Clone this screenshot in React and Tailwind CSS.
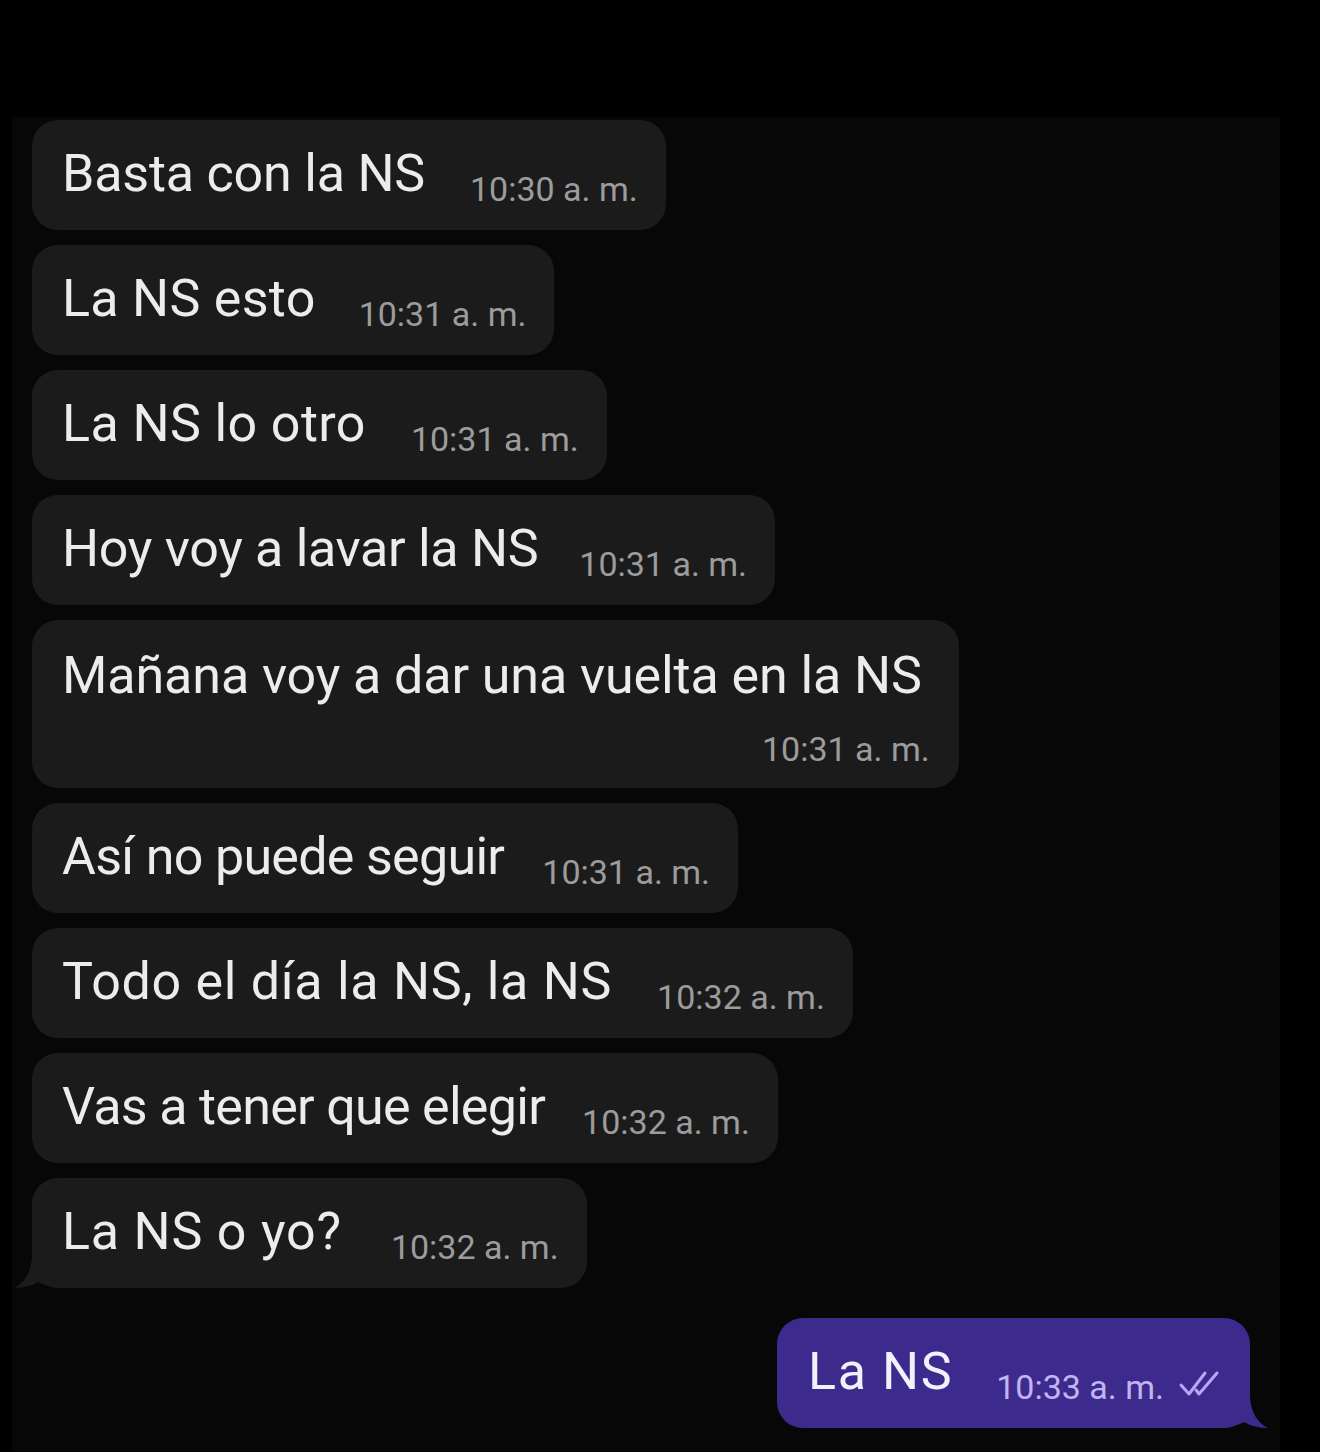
const MESSAGES = [
  { text: "Basta con la NS", time: "10:30 a. m.", tr: "tracking-[-0.2px]", gap: "ml-[45px]" },
  { text: "La NS esto", time: "10:31 a. m.", tr: "tracking-[0.3px]", gap: "ml-[43px]" },
  { text: "La NS lo otro", time: "10:31 a. m.", tr: "tracking-[0.4px]", gap: "ml-[45px]" },
  { text: "Hoy voy a lavar la NS", time: "10:31 a. m.", tr: "tracking-[-0.3px]", gap: "ml-[41px]" },
  { text: "Mañana voy a dar una vuelta en la NS", time: "10:31 a. m.", tr: "tracking-[-0.1px]", wrap: true },
  { text: "Así no puede seguir", time: "10:31 a. m.", tr: "tracking-[-0.7px]", gap: "ml-[38px]" },
  { text: "Todo el día la NS, la NS", time: "10:32 a. m.", tr: "tracking-[0.7px]", gap: "ml-[45px]" },
  { text: "Vas a tener que elegir", time: "10:32 a. m.", tr: "tracking-[-0.7px]", gap: "ml-[37px]" },
  { text: "La NS o yo?", time: "10:32 a. m.", tr: "tracking-[0.8px]", gap: "ml-[49px]", tail: true },
];

const FONT = { fontFamily: "Roboto, 'Noto Sans', sans-serif" };

function Received({ text, time, wrap, tail, tr, gap }) {
  if (wrap) {
    return (
      <div className="relative self-start flex flex-col rounded-[26px] bg-[#1b1b1c] pl-[30px] pr-[37px] pt-[25px] pb-[19px]">
        <span className={`text-[52px] leading-[62px] text-[#ececec] ${tr}`}>{text}</span>
        <span className="mt-[22px] mr-[-8px] self-end text-[34px] leading-[40px] text-[#9c9c9c]">{time}</span>
      </div>
    );
  }
  return (
    <div className="relative self-start flex items-end rounded-[26px] bg-[#1b1b1c] pl-[30px] pr-[28px] pt-[23px] pb-[25px]">
      <span className={`text-[52px] leading-[62px] text-[#ececec] ${tr}`}>{text}</span>
      <span className={`${gap} mb-[-4px] text-[34px] leading-[40px] text-[#9c9c9c]`}>{time}</span>
      {tail && (
        <svg className="absolute left-[-18px] bottom-0" width="44" height="50" viewBox="0 0 44 50">
          <path d="M44 0 L18 0 L18 20 Q16 42 0 50 Q14 50 24 44 Q32 48 44 50 Z" fill="#1b1b1c" />
        </svg>
      )}
    </div>
  );
}

function Sent({ text, time }) {
  return (
    <div className="relative self-end mr-[10px] flex items-end rounded-[26px] bg-[#3c2a8c] pl-[31px] pr-[28px] pt-[23px] pb-[25px]">
      <span className="text-[52px] leading-[62px] text-[#f2f0fa] tracking-[1.6px]">{text}</span>
      <span className="ml-[43px] mb-[-4px] text-[34px] leading-[40px] text-[#c2b4f2]">{time}</span>
      <svg className="ml-[14px] mb-[5px]" width="44" height="28" viewBox="0 0 44 28" fill="none" stroke="#b9a6f6" strokeWidth="3" strokeLinecap="round" strokeLinejoin="round">
        <path d="M3 15 L11 24 L27 3" />
        <path d="M18 20 L21 24 L39 3" />
      </svg>
      <svg className="absolute right-[-18px] bottom-0" width="44" height="50" viewBox="0 0 44 50">
        <path d="M0 0 L26 0 L26 20 Q28 42 44 50 Q30 50 20 44 Q12 48 0 50 Z" fill="#3c2a8c" />
      </svg>
    </div>
  );
}

export default function App() {
  return (
    <div className="min-h-[1452px] bg-black" style={FONT}>
      <div className="h-[117px]" />
      <div className="ml-[12px] w-[1268px] min-h-[1335px] bg-[#070707] pl-[20px] pr-[20px] pt-[3px] pb-[24px] flex flex-col">
        <div className="flex flex-col gap-[15px]">
          {MESSAGES.map((m, i) => (
            <Received key={i} {...m} />
          ))}
        </div>
        <div className="mt-[30px] flex flex-col">
          <Sent text="La NS" time="10:33 a. m." />
        </div>
      </div>
    </div>
  );
}
